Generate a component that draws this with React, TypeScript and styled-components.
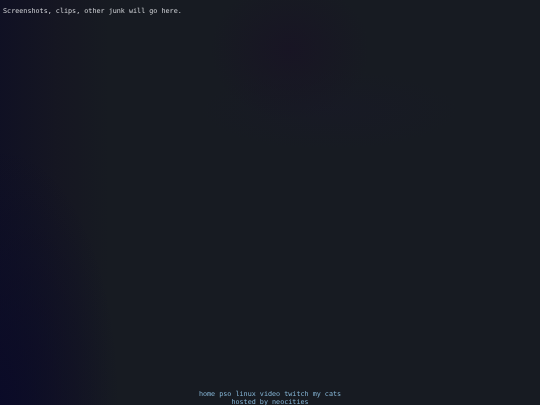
import React from "react";
import styled, { createGlobalStyle } from "styled-components";

const Global = createGlobalStyle`
  html, body { margin: 0; padding: 0; height: 100%; overflow: hidden; }
  body { background: #171b22; }
  #root { height: 100%; }
`;

const Page = styled.div`
  box-sizing: border-box;
  width: 540px;
  height: 405px;
  display: flex;
  flex-direction: column;
  justify-content: space-between;
  font-family: "DejaVu Sans Mono", "Liberation Mono", monospace;
  font-size: 6.75px;
  line-height: 8px;
  -webkit-font-smoothing: antialiased;
  background:
    radial-gradient(ellipse 80px 70px at 290px 50px, rgba(24, 20, 36, 0.9), rgba(24, 20, 36, 0) 100%),
    radial-gradient(ellipse 130px 40px at 330px 110px, rgba(24, 24, 40, 0.45), rgba(24, 24, 40, 0) 100%),
    radial-gradient(ellipse 120px 260px at 0px 405px, rgba(10, 10, 40, 0.9), rgba(10, 10, 40, 0) 100%),
    linear-gradient(90deg, rgba(14, 14, 36, 0.8) 0px, rgba(20, 18, 34, 0.5) 60px, rgba(23, 27, 34, 0) 110px),
    #171b22;
  overflow: hidden;
`;

const Intro = styled.p`
  margin: 0;
  padding: 7px 0 0 3px;
  color: #d2d4d8;
  white-space: nowrap;
  will-change: opacity;
`;

const Footer = styled.footer`
  display: flex;
  flex-direction: column;
  align-items: center;
  margin-bottom: -1px;
  color: #86b6d6;
  will-change: opacity;
`;

const Nav = styled.nav`
  display: flex;
  gap: 4.06px;
`;

const Link = styled.a`
  color: #86b6d6;
  text-decoration: none;
`;

const links = ["home", "pso", "linux", "video", "twitch", "my cats"];

export default function App() {
  return (
    <>
      <Global />
      <Page>
        <Intro>Screenshots, clips, other junk will go here.</Intro>
        <Footer>
          <Nav>
            {links.map((l) => (
              <Link key={l} href="#">
                {l}
              </Link>
            ))}
          </Nav>
          <div>
            hosted by <Link href="#">neocities</Link>
          </div>
        </Footer>
      </Page>
    </>
  );
}
